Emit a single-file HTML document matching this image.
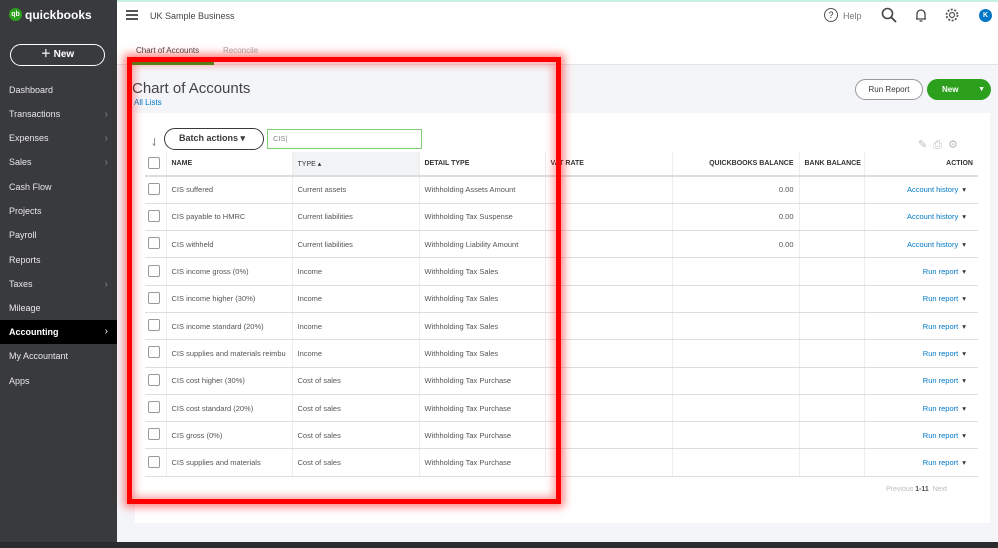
<!DOCTYPE html>
<html><head><meta charset="utf-8"><style>
*{box-sizing:border-box;margin:0;padding:0}
body{width:998px;height:548px;overflow:hidden;font-family:"Liberation Sans",sans-serif;background:#f4f5f8;position:relative;color:#393a3d}
.side{position:absolute;left:0;top:0;width:117px;height:548px;background:#393a3d;color:#fff}
.side .item{position:absolute;left:9px;font-size:9px;color:#e8e8e8}
.side .arr{position:absolute;right:9px;color:#888;font-size:10px}
.hdr{position:absolute;left:117px;top:0;right:0;height:40px;background:#fff;border-top:2px solid #c8f0e0}
.tabs{position:absolute;left:117px;top:40px;right:0;height:25px;background:#fff;border-bottom:1px solid #e3e3e3}
.panel{position:absolute;left:135px;top:113px;width:855px;height:410px;background:#fff}
table{position:absolute;left:145px;top:152px;border-collapse:collapse;font-size:7.5px}
td,th{height:27.3px;border-bottom:1px solid #ddd;border-left:1px solid #eee;padding-left:5px;text-align:left;font-weight:normal;color:#555}
th{height:24px;font-weight:bold;font-size:7px;color:#333;border-bottom:2px solid #ddd}
td:first-child,th:first-child{border-left:none;padding-left:3px}
.cb{display:inline-block;width:12px;height:12px;border:1px solid #999;border-radius:2px;background:#fff}
.r{text-align:right;padding-right:5px}
.lk{color:#0077c5;text-align:right;padding-right:12px}
.lk i{font-style:normal;color:#333;margin-left:4px}
.red{position:absolute;left:127px;top:57px;width:434px;height:447px;border:5px solid #f00;box-shadow:0 0 8px 3px rgba(255,0,0,.5),inset 0 0 8px 3px rgba(255,0,0,.35)}
</style></head><body>
<div class="side">
<div style="position:absolute;left:9px;top:8px;width:13px;height:13px;border-radius:50%;background:#2ca01c;color:#fff;font-size:7px;font-weight:bold;text-align:center;line-height:13px">qb</div>
<div style="position:absolute;left:25px;top:8px;font-size:12px;font-weight:bold;color:#fff">quickbooks</div>
<div style="position:absolute;left:10px;top:44px;width:95px;height:22px;border:1.5px solid #fff;border-radius:11px;text-align:center;font-size:10px;line-height:19px;font-weight:bold">＋ New</div>
<div class="item" style="top:85px">Dashboard</div>
<div class="item" style="top:109px">Transactions</div><div class="arr" style="top:109px">›</div>
<div class="item" style="top:133px">Expenses</div><div class="arr" style="top:133px">›</div>
<div class="item" style="top:157px">Sales</div><div class="arr" style="top:157px">›</div>
<div class="item" style="top:182px">Cash Flow</div>
<div class="item" style="top:206px">Projects</div>
<div class="item" style="top:230px">Payroll</div>
<div class="item" style="top:255px">Reports</div>
<div class="item" style="top:279px">Taxes</div><div class="arr" style="top:279px">›</div>
<div class="item" style="top:303px">Mileage</div>
<div style="position:absolute;left:0;top:320px;width:117px;height:24px;background:#000"></div>
<div class="item" style="top:327px;color:#fff;font-weight:bold">Accounting</div><div class="arr" style="top:326px;color:#fff">›</div>
<div class="item" style="top:351px">My Accountant</div>
<div class="item" style="top:376px">Apps</div>
</div>
<div class="hdr">
<div style="position:absolute;left:9px;top:8px;width:12px;height:2px;background:#555;box-shadow:0 4px 0 #555,0 8px 0 #555"></div>
<div style="position:absolute;left:33px;top:9px;font-size:9px;color:#444">UK Sample Business</div>
<div style="position:absolute;left:707px;top:6px;width:14px;height:14px;border:1.2px solid #555;border-radius:50%;font-size:9px;text-align:center;line-height:12px">?</div>
<div style="position:absolute;left:726px;top:9px;font-size:9px;color:#777">Help</div>
<svg style="position:absolute;left:764px;top:5px" width="16" height="16"><circle cx="6.5" cy="6.5" r="5" fill="none" stroke="#444" stroke-width="1.6"/><path d="M10 10l5 5" stroke="#444" stroke-width="1.8"/></svg>
<svg style="position:absolute;left:797px;top:5px" width="14" height="16"><path d="M3 12V7a4 4 0 018 0v5H2h10M5.5 14h3" fill="none" stroke="#444" stroke-width="1.3"/></svg>
<svg style="position:absolute;left:827px;top:5px" width="16" height="16"><circle cx="8" cy="8" r="2.5" fill="none" stroke="#555" stroke-width="1.2"/><circle cx="8" cy="8" r="5.5" fill="none" stroke="#555" stroke-width="1.8" stroke-dasharray="2 1.5"/></svg>
<div style="position:absolute;left:862px;top:7px;width:13px;height:13px;border-radius:50%;background:#0077c5;color:#fff;font-size:7px;font-weight:bold;text-align:center;line-height:13px">K</div>
</div>
<div class="tabs">
<div style="position:absolute;left:19px;top:6px;font-size:8px;color:#444">Chart of Accounts</div>
<div style="position:absolute;left:14px;top:22px;width:83px;height:3px;background:#2ca01c"></div>
<div style="position:absolute;left:106px;top:6px;font-size:8px;color:#aaa">Reconcile</div>
</div>
<div style="position:absolute;left:132px;top:80px;font-size:15px;color:#444">Chart of Accounts</div>
<div style="position:absolute;left:134px;top:98px;font-size:8px;color:#0077c5">All Lists</div>
<div style="position:absolute;left:855px;top:79px;width:68px;height:21px;border:1px solid #999;border-radius:11px;background:#fff;font-size:8px;text-align:center;line-height:19px">Run Report</div>
<div style="position:absolute;left:927px;top:79px;width:64px;height:21px;border-radius:11px;background:#2ca01c;color:#fff;font-size:8px;font-weight:bold;line-height:21px;padding-left:15px">New<span style="position:absolute;right:6px;font-size:7px">▼</span></div>
<div class="panel"></div>
<div style="position:absolute;left:150px;top:136px;font-size:11px;color:#888">⇃</div>
<div style="position:absolute;left:164px;top:128px;width:100px;height:22px;border:1.5px solid #393a3d;border-radius:11px;background:#fff;font-size:9px;font-weight:bold;line-height:19px;padding-left:14px">Batch actions ▾</div>
<div style="position:absolute;left:267px;top:129px;width:155px;height:20px;border:1px solid #7fcf73;background:#fff;font-size:7.5px;color:#888;line-height:18px;padding-left:5px">CIS|</div>
<div style="position:absolute;left:918px;top:138px;font-size:11px;color:#bbb;letter-spacing:6px">✎⎙⚙</div>
<table>
<tr><th style="width:21px"><span class="cb"></span></th><th style="width:126px">NAME</th><th style="width:127px;background:#f2f3f5;font-weight:normal">TYPE ▴</th><th style="width:126px">DETAIL TYPE</th><th style="width:127px">VAT RATE</th><th style="width:127px" class="r">QUICKBOOKS BALANCE</th><th style="width:65px">BANK BALANCE</th><th style="width:114px" class="r">ACTION</th></tr>
<tr><td><span class="cb"></span></td><td>CIS suffered</td><td>Current assets</td><td>Withholding Assets Amount</td><td></td><td class="r">0.00</td><td></td><td class="lk">Account history<i>▾</i></td></tr>
<tr><td><span class="cb"></span></td><td>CIS payable to HMRC</td><td>Current liabilities</td><td>Withholding Tax Suspense</td><td></td><td class="r">0.00</td><td></td><td class="lk">Account history<i>▾</i></td></tr>
<tr><td><span class="cb"></span></td><td>CIS withheld</td><td>Current liabilities</td><td>Withholding Liability Amount</td><td></td><td class="r">0.00</td><td></td><td class="lk">Account history<i>▾</i></td></tr>
<tr><td><span class="cb"></span></td><td>CIS income gross (0%)</td><td>Income</td><td>Withholding Tax Sales</td><td></td><td></td><td></td><td class="lk">Run report<i>▾</i></td></tr>
<tr><td><span class="cb"></span></td><td>CIS income higher (30%)</td><td>Income</td><td>Withholding Tax Sales</td><td></td><td></td><td></td><td class="lk">Run report<i>▾</i></td></tr>
<tr><td><span class="cb"></span></td><td>CIS income standard (20%)</td><td>Income</td><td>Withholding Tax Sales</td><td></td><td></td><td></td><td class="lk">Run report<i>▾</i></td></tr>
<tr><td><span class="cb"></span></td><td>CIS supplies and materials reimbu</td><td>Income</td><td>Withholding Tax Sales</td><td></td><td></td><td></td><td class="lk">Run report<i>▾</i></td></tr>
<tr><td><span class="cb"></span></td><td>CIS cost higher (30%)</td><td>Cost of sales</td><td>Withholding Tax Purchase</td><td></td><td></td><td></td><td class="lk">Run report<i>▾</i></td></tr>
<tr><td><span class="cb"></span></td><td>CIS cost standard (20%)</td><td>Cost of sales</td><td>Withholding Tax Purchase</td><td></td><td></td><td></td><td class="lk">Run report<i>▾</i></td></tr>
<tr><td><span class="cb"></span></td><td>CIS gross (0%)</td><td>Cost of sales</td><td>Withholding Tax Purchase</td><td></td><td></td><td></td><td class="lk">Run report<i>▾</i></td></tr>
<tr><td><span class="cb"></span></td><td>CIS supplies and materials</td><td>Cost of sales</td><td>Withholding Tax Purchase</td><td></td><td></td><td></td><td class="lk">Run report<i>▾</i></td></tr>
</table>
<div style="position:absolute;left:886px;top:486px;font-size:7px;color:#bbb">Previous <b style="color:#555">1-11</b> &nbsp;Next</div>
<div class="red"></div>
<div style="position:absolute;left:0;top:542px;width:998px;height:6px;background:#2a2b2d"></div>
</body></html>
